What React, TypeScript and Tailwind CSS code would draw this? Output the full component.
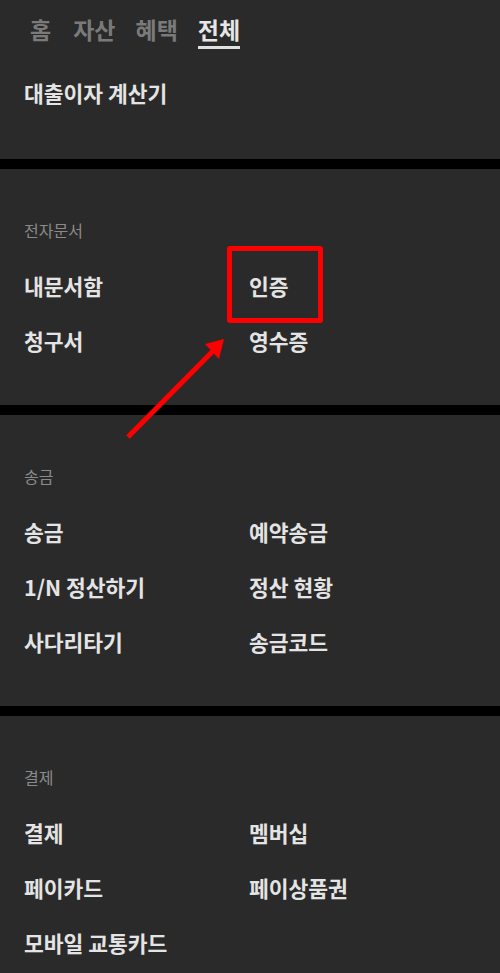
import React from "react";

const font = { fontFamily: '"Noto Sans CJK KR", "Noto Sans", sans-serif' };

function Section({ label, items }: { label: string; items: string[] }) {
  return (
    <div className="bg-[#2a2a2a] pt-[51px] pb-[36px]">
      <div className="pl-[24px] text-[16px] leading-5 text-[#8a8a8a]">{label}</div>
      <div className="mt-[19px] grid grid-cols-[225px_1fr] pl-[24px]">
        {items.map((t, i) => (
          <div key={i} className="h-[55px] flex items-center text-[21.5px] font-bold text-[#e4e4e4]">
            {t}
          </div>
        ))}
      </div>
    </div>
  );
}

export default function App() {
  return (
    <div className="relative w-[500px] h-[973px] overflow-hidden bg-[#2a2a2a]" style={font}>
      <div className="h-[159px] bg-[#2a2a2a]">
        <div className="flex gap-[20px] pl-[30px] pt-[14px]">
          {["홈", "자산", "혜택"].map((t, i) => (
            <div
              key={t}
              className={
                i === 0
                  ? "mr-[2px] text-[23px] leading-[31px] font-bold text-[#7a7a7a]"
                  : "text-[23px] leading-[31px] font-bold text-[#7a7a7a]"
              }
            >
              {t}
            </div>
          ))}
          <div className="flex flex-col">
            <div className="text-[23px] leading-[31px] font-bold text-[#e6e6e6]">전체</div>
            <div className="mt-[1px] h-[3px] bg-[#e0e0e0]" />
          </div>
        </div>
        <div className="mt-[17px] pl-[24px] h-[55px] flex items-center text-[21.5px] font-bold text-[#e4e4e4]">
          대출이자 계산기
        </div>
      </div>
      <div className="h-[10px] bg-black" />
      <Section label="전자문서" items={["내문서함", "인증", "청구서", "영수증"]} />
      <div className="h-[10px] bg-black" />
      <Section
        label="송금"
        items={["송금", "예약송금", "1/N 정산하기", "정산 현황", "사다리타기", "송금코드"]}
      />
      <div className="h-[10px] bg-black" />
      <Section
        label="결제"
        items={["결제", "멤버십", "페이카드", "페이상품권", "모바일 교통카드"]}
      />

      <div className="absolute left-[227px] top-[246px] w-[96px] h-[77px] border-[5px] border-[#ff0000] rounded-[3px]" />
      <svg className="absolute left-0 top-0" width="500" height="973" viewBox="0 0 500 973">
        <line x1="128" y1="437" x2="214" y2="350" stroke="#ff0000" strokeWidth="5" />
        <polygon points="224,339 205,344 219,359" fill="#ff0000" />
      </svg>
    </div>
  );
}
